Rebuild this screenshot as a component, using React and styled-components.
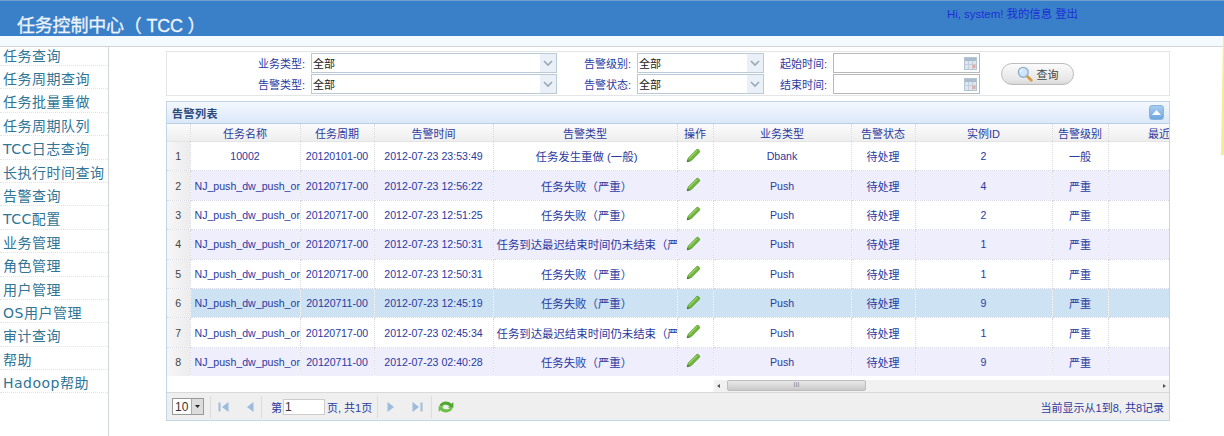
import styled, { createGlobalStyle } from "styled-components";

const FONT = `"Liberation Sans", "Noto Sans CJK SC", Arial, sans-serif`;

const Global = createGlobalStyle`
  html, body { margin: 0; padding: 0; background: #fff; }
  body { font-family: ${FONT}; font-size: 11px; overflow: hidden; }
`;

const Page = styled.div`
  position: relative;
  width: 1224px;
  height: 436px;
  overflow: hidden;
`;

const Header = styled.header`
  height: 35px;
  background: #3a80c9;
  border-top: 1px solid #6fa0cf;
  display: flex;
  justify-content: space-between;
`;

const Title = styled.h1`
  margin: 15px 0 0 17px;
  font-size: 18px;
  line-height: 20px;
  font-weight: normal;
  color: #eef4fb;
  letter-spacing: -0.2px;
  -webkit-text-stroke: 0.3px #eef4fb;
`;

const UserLinks = styled.div`
  margin: 6px 146px 0 0;
  font-size: 11.4px;
  line-height: 14px;
  color: #1a2fd6;
`;

const Strip = styled.div`
  height: 10px;
  background: #f3fbff;
  border-bottom: 1px solid #cfd5d9;
`;

const Body = styled.div`
  display: flex;
  height: 389px;
`;

const Sidebar = styled.nav`
  width: 108px;
  flex: none;
  border-right: 1px solid #d3d6da;
`;

const NavItem = styled.div`
  height: 22.4px;
  line-height: 27px;
  padding-left: 3px;
  font-family: "DejaVu Sans", "Noto Sans CJK SC", sans-serif;
  font-size: 14px;
  letter-spacing: 0.5px;
  color: #2f7596;
  border-bottom: 1px dotted #dde4e2;
  white-space: nowrap;
  &:first-child {
    height: 18px;
    line-height: 19px;
  }
`;

const Main = styled.main`
  width: 1004px;
  margin: 4px 0 0 57px;
`;

const FilterBox = styled.form`
  height: 42px;
  border: 1px solid #e3e5e6;
  display: grid;
  grid-template-columns: 144px 246px 80px 127px 69px 147px 1fr;
  grid-template-rows: 20px 20px;
  row-gap: 1px;
  padding-top: 1px;
  align-items: center;
  margin-bottom: 5px;
`;

const Label = styled.label`
  text-align: right;
  padding-right: 6px;
  font-size: 11px;
  color: #2b3aa0;
`;

const Control = styled.div`
  height: 20px;
  box-sizing: border-box;
  border: 1px solid #bcc9d6;
  background: #fff;
  display: flex;
  justify-content: space-between;
  align-items: center;
  padding-left: 1px;
  font-size: 11px;
  color: #222;
`;

const ChevronBox = styled.span`
  width: 16px;
  height: 18px;
  background: #e9f0f7;
  display: flex;
  align-items: center;
  justify-content: center;
`;

const DateBox = styled(Control)`
  border-color: #b8b8b8;
  padding-right: 2px;
`;

const QueryCell = styled.div`
  grid-column: 7;
  grid-row: 1 / span 2;
  padding-left: 21px;
`;

const QueryButton = styled.button`
  width: 73px;
  height: 22px;
  margin-top: 1px;
  border: 1px solid #bdbdbd;
  border-radius: 11px;
  background: linear-gradient(#fbfbfb, #e6e6e6 80%, #d8d8d8);
  display: flex;
  align-items: center;
  justify-content: center;
  gap: 4px;
  padding: 0;
  font-family: ${FONT};
  font-size: 11px;
  color: #444;
`;

const Panel = styled.section`
  height: 320px;
  box-sizing: border-box;
  border: 1px solid #c3d6e8;
  display: flex;
  flex-direction: column;
`;

const PanelTitle = styled.div`
  height: 21px;
  flex: none;
  display: flex;
  align-items: center;
  justify-content: space-between;
  padding: 0 5px;
  background: linear-gradient(#f4f8fd, #dbe8fa);
  border-bottom: 1px solid #b9cfe8;
  font-size: 11px;
  font-weight: bold;
  letter-spacing: 0.5px;
  color: #2b4a7a;
`;

const Collapse = styled.span`
  width: 15px;
  height: 15px;
  border-radius: 3px;
  background: linear-gradient(#a6cdf0, #6da6e0);
  border: 1px solid #8ab3dc;
  box-sizing: border-box;
  display: flex;
  align-items: center;
  justify-content: center;
`;

const TableWrap = styled.div`
  height: 252px;
  overflow: hidden;
`;

const Table = styled.table`
  width: 1043px;
  table-layout: fixed;
  border-collapse: collapse;
  font-size: 10.6px;
`;

const Th = styled.th`
  height: 17px;
  padding: 0;
  font-size: 11px;
  font-weight: normal;
  color: #2b3aa0;
  background: linear-gradient(#fbfbfb, #eeeeee);
  border-right: 1px dotted #d4d4d4;
  border-bottom: 1px solid #e4e4e4;
  white-space: nowrap;
  overflow: hidden;
`;

const Row = styled.tr`
  background: ${(p) => (p.$selected ? "#cde3f3" : p.$alt ? "#eeeefd" : "#fff")};
`;

const Td = styled.td`
  height: 28.4px;
  padding: 0;
  text-align: center;
  color: #2b3aa0;
  border-right: 1px dotted #d8d8e4;
  border-bottom: 1px dotted #d8d8e4;
  white-space: nowrap;
  overflow: hidden;
`;

const NameCell = styled(Td)`
  text-align: ${(p) => (p.$left ? "left" : "center")};
  padding-left: ${(p) => (p.$left ? "4px" : "0")};
`;

const CjkCell = styled(Td)`
  font-size: 11px;
`;

const TypeCell = styled(Td)`
  font-size: 11.4px;
  padding: 0 0 0 3px;
`;

const ActionCell = styled(Td)`
  padding-right: 3px;
`;

const IndexCell = styled(Td)`
  color: #444;
  background: linear-gradient(90deg, #f6f6f6, #ececec);
`;

const ScrollRow = styled.div`
  height: 12px;
  flex: none;
  margin-left: 547px;
  margin-top: 4px;
  background: #f1f1f1;
  display: flex;
  align-items: center;
  justify-content: space-between;
  padding: 0 3px;
  position: relative;
`;

const ScrollThumb = styled.span`
  position: absolute;
  left: 13px;
  top: 0;
  width: 139px;
  height: 11px;
  box-sizing: border-box;
  border: 1px solid #bdbdbd;
  border-radius: 2px;
  background: linear-gradient(#e9e9e9, #c9c9c9);
  color: #888;
  font-size: 7px;
  line-height: 8px;
  text-align: center;
`;

const Arrow = styled.i`
  width: 0;
  height: 0;
  border-top: 2.5px solid transparent;
  border-bottom: 2.5px solid transparent;
  ${(p) => (p.$left ? "border-right: 3px solid #555;" : "border-left: 3px solid #555;")}
`;

const Pager = styled.div`
  flex: 1;
  background: #efefef;
  border-top: 1px solid #d9d9d9;
  display: flex;
  align-items: center;
  padding: 0 5px;
  color: #333;
  font-size: 11px;
`;

const PageSize = styled.div`
  width: 32px;
  height: 17px;
  box-sizing: border-box;
  border: 1px solid #999;
  background: #fff;
  display: flex;
  align-items: center;
  justify-content: space-between;
  font-size: 12px;
  padding-left: 2px;
`;

const SizeDrop = styled.span`
  width: 11px;
  height: 15px;
  background: #dcdcdc;
  border-left: 1px solid #aaa;
  display: flex;
  align-items: center;
  justify-content: center;
`;

const Sep = styled.span`
  width: 1px;
  height: 22px;
  background: #dcdcdc;
  margin: ${(p) => p.$margin};
`;

const PageIcon = styled.svg`
  width: ${(p) => p.$size || 12}px;
  height: 12px;
  margin: 0 6.5px;
  flex: none;
`;

const RefreshIcon = styled(PageIcon)`
  margin: 0;
`;

const PageInput = styled.span`
  width: 42px;
  height: 16px;
  box-sizing: border-box;
  display: inline-block;
  border: 1px solid #ccc;
  background: #fff;
  margin: 0 2px 0 1px;
  line-height: 14px;
  font-size: 12px;
  color: #333;
  padding-left: 1px;
`;

const PageText = styled.span`
  color: #2b3aa0;
  display: flex;
  align-items: center;
  margin-left: 1px;
`;

const Summary = styled.span`
  margin-left: auto;
  color: #2b3aa0;
`;

const YellowEdge = styled.div`
  position: absolute;
  right: 0;
  top: 36px;
  width: 3px;
  height: 119px;
  background: #f1ee8f;
  clip-path: polygon(2px 0, 100% 0, 100% 100%, 0 100%);
`;

const NAV = ["任务查询", "任务周期查询", "任务批量重做", "任务周期队列", "TCC日志查询", "长执行时间查询", "告警查询", "TCC配置", "业务管理", "角色管理", "用户管理", "OS用户管理", "审计查询", "帮助", "Hadoop帮助"];

const COLS = [23, 110, 74, 119, 184, 36, 138, 64, 137, 56, 102];
const HEADS = ["", "任务名称", "任务周期", "告警时间", "告警类型", "操作", "业务类型", "告警状态", "实例ID", "告警级别", "最近"];

const NJ = "NJ_push_dw_push_or";
const LATE = "任务到达最迟结束时间仍未结束（严重）";
const FAIL = "任务失败（严重）";
const ROWS = [
  ["10002", "20120101-00", "2012-07-23 23:53:49", "任务发生重做 (一般)", "Dbank", "2", "一般"],
  [NJ, "20120717-00", "2012-07-23 12:56:22", FAIL, "Push", "4", "严重"],
  [NJ, "20120717-00", "2012-07-23 12:51:25", FAIL, "Push", "2", "严重"],
  [NJ, "20120717-00", "2012-07-23 12:50:31", LATE, "Push", "1", "严重"],
  [NJ, "20120717-00", "2012-07-23 12:50:31", FAIL, "Push", "1", "严重"],
  [NJ, "20120711-00", "2012-07-23 12:45:19", FAIL, "Push", "9", "严重"],
  [NJ, "20120717-00", "2012-07-23 02:45:34", LATE, "Push", "1", "严重"],
  [NJ, "20120711-00", "2012-07-23 02:40:28", FAIL, "Push", "9", "严重"],
];

const Chevron = () => (
  <svg width="10" height="7" viewBox="0 0 10 7">
    <path d="M1 1l4 4 4-4" fill="none" stroke="#9aa8b5" strokeWidth="1.6" />
  </svg>
);

const Select = () => (
  <Control>
    全部
    <ChevronBox><Chevron /></ChevronBox>
  </Control>
);

const CalendarIcon = () => (
  <svg width="13" height="13" viewBox="0 0 13 13">
    <rect x="0.5" y="0.5" width="12" height="12" fill="#dde6ee" stroke="#b5c4d2" />
    <rect x="1" y="1" width="11" height="3" fill="#a9bccd" />
    <path d="M4.5 4v8M8.5 4v8M1 7.5h11" stroke="#c3ced8" />
    <rect x="8.5" y="8" width="3" height="3" fill="#e6a9a0" />
  </svg>
);

const DateField = () => (
  <DateBox>
    <span />
    <CalendarIcon />
  </DateBox>
);

const Pencil = () => (
  <svg width="15" height="15" viewBox="0 0 15 15">
    <path d="M1.2 13.8l.9-3.6 8.4-8.4c.6-.6 1.5-.6 2.1 0l.6.6c.6.6.6 1.5 0 2.1l-8.4 8.4z" fill="#72b83a" stroke="#3f8a1f" strokeWidth="0.7" />
    <path d="M3 10.5l8-8" stroke="#b6e384" strokeWidth="1" />
    <path d="M1.2 13.8l.5-1.9 1.4 1.4z" fill="#444" />
  </svg>
);

const Magnifier = () => (
  <svg width="16" height="16" viewBox="0 0 14 14">
    <path d="M8.5 8.5l4 4" stroke="#d99a3c" strokeWidth="2.4" strokeLinecap="round" />
    <circle cx="5.5" cy="5.5" r="4.3" fill="#cfe4f7" stroke="#8fb0cf" strokeWidth="1.2" />
    <path d="M3 5a2.6 2.6 0 012-2" stroke="#fff" strokeWidth="1" fill="none" />
  </svg>
);

const NavIcon = ({ dir, bar }) => (
  <PageIcon viewBox="0 0 12 12">
    {bar && <rect x={dir === "l" ? 0.5 : 9.5} y="1.5" width="2" height="9" fill="#9dbbdc" />}
    <path d={dir === "l" ? "M10.5 1v10L4 6z" : "M1.500 1v10L8 6z"} fill="#9dbbdc" />
  </PageIcon>
);

const Refresh = () => (
  <RefreshIcon $size={16} viewBox="1 1.5 12 9" preserveAspectRatio="none">
    <path d="M2 5c1-3 6-4.500 9-1.500l1.500-1v4h-4l1.200-1C8 3.800 5 3.800 4 5.500z" fill="#4ea82e" />
    <path d="M12 7c-1 3-6 4.500-9 1.500l-1.500 1v-4h4l-1.200 1c1.700 1.700 4.700 1.700 5.700 0z" fill="#6cc04a" />
  </RefreshIcon>
);

export default function App() {
  return (
    <Page>
      <Global />
      <Header>
        <Title>任务控制中心（ TCC ）</Title>
        <UserLinks>Hi, system! 我的信息 登出</UserLinks>
      </Header>
      <Strip />
      <Body>
        <Sidebar>
          {NAV.map((item) => (
            <NavItem key={item}>{item}</NavItem>
          ))}
        </Sidebar>
        <Main>
          <FilterBox>
            <Label>业务类型:</Label>
            <Select />
            <Label>告警级别:</Label>
            <Select />
            <Label>起始时间:</Label>
            <DateField />
            <QueryCell>
              <QueryButton type="button"><Magnifier />查询</QueryButton>
            </QueryCell>
            <Label>告警类型:</Label>
            <Select />
            <Label>告警状态:</Label>
            <Select />
            <Label>结束时间:</Label>
            <DateField />
          </FilterBox>
          <Panel>
            <PanelTitle>
              告警列表
              <Collapse>
                <svg width="9" height="5" viewBox="0 0 9 5"><path d="M4.500 0L9 5H0z" fill="#fff" /></svg>
              </Collapse>
            </PanelTitle>
            <TableWrap>
              <Table>
                <colgroup>
                  {COLS.map((w, i) => <col key={i} style={{ width: w }} />)}
                </colgroup>
                <thead>
                  <tr>{HEADS.map((h, i) => <Th key={i}>{h}</Th>)}</tr>
                </thead>
                <tbody>
                  {ROWS.map((r, i) => (
                    <Row key={i} $alt={i % 2 === 1} $selected={i === 5}>
                      <IndexCell>{i + 1}</IndexCell>
                      <NameCell $left={i > 0}>{r[0]}</NameCell>
                      <Td>{r[1]}</Td>
                      <Td>{r[2]}</Td>
                      <TypeCell>{r[3]}</TypeCell>
                      <ActionCell><Pencil /></ActionCell>
                      <Td>{r[4]}</Td>
                      <CjkCell>待处理</CjkCell>
                      <Td>{r[5]}</Td>
                      <CjkCell>{r[6]}</CjkCell>
                      <Td />
                    </Row>
                  ))}
                </tbody>
              </Table>
            </TableWrap>
            <ScrollRow>
              <Arrow $left />
              <ScrollThumb>III</ScrollThumb>
              <Arrow />
            </ScrollRow>
            <Pager>
              <PageSize>
                10
                <SizeDrop>
                  <svg width="5" height="3" viewBox="0 0 5 3"><path d="M0 0h5L2.500 3z" fill="#222" /></svg>
                </SizeDrop>
              </PageSize>
              <Sep $margin="0 0 0 6px" />
              <NavIcon dir="l" bar />
              <NavIcon dir="l" />
              <Sep $margin="0 8px 0 0" />
              <PageText>第<PageInput>1</PageInput>页, 共1页</PageText>
              <Sep $margin="0 1.5px 0 5px" />
              <NavIcon dir="r" />
              <NavIcon dir="r" bar />
              <Sep $margin="0 6px 0 1px" />
              <Refresh />
              <Summary>当前显示从1到8, 共8记录</Summary>
            </Pager>
          </Panel>
        </Main>
      </Body>
      <YellowEdge />
    </Page>
  );
}
